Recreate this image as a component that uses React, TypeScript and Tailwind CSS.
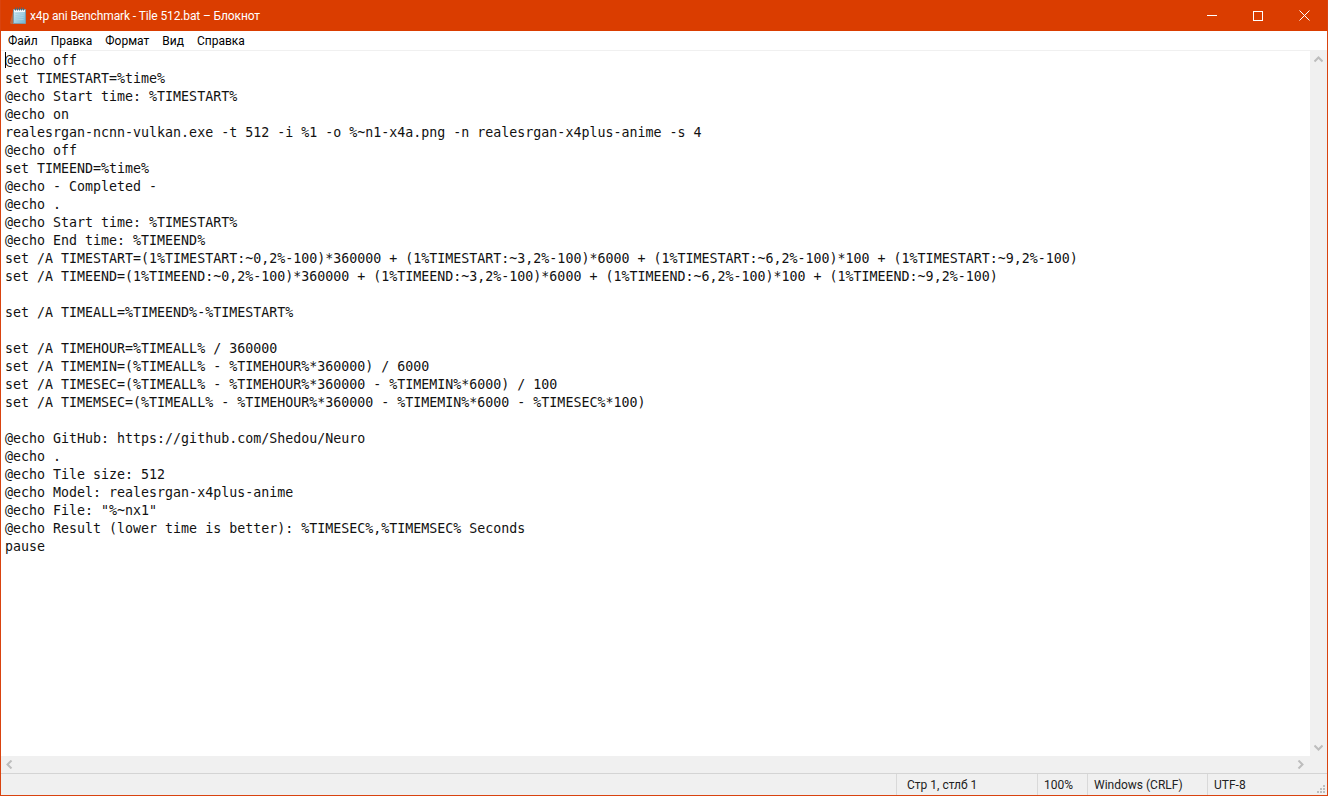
const lines = [
  "@echo off",
  "set TIMESTART=%time%",
  "@echo Start time: %TIMESTART%",
  "@echo on",
  "realesrgan-ncnn-vulkan.exe -t 512 -i %1 -o %~n1-x4a.png -n realesrgan-x4plus-anime -s 4",
  "@echo off",
  "set TIMEEND=%time%",
  "@echo - Completed -",
  "@echo .",
  "@echo Start time: %TIMESTART%",
  "@echo End time: %TIMEEND%",
  "set /A TIMESTART=(1%TIMESTART:~0,2%-100)*360000 + (1%TIMESTART:~3,2%-100)*6000 + (1%TIMESTART:~6,2%-100)*100 + (1%TIMESTART:~9,2%-100)",
  "set /A TIMEEND=(1%TIMEEND:~0,2%-100)*360000 + (1%TIMEEND:~3,2%-100)*6000 + (1%TIMEEND:~6,2%-100)*100 + (1%TIMEEND:~9,2%-100)",
  "",
  "set /A TIMEALL=%TIMEEND%-%TIMESTART%",
  "",
  "set /A TIMEHOUR=%TIMEALL% / 360000",
  "set /A TIMEMIN=(%TIMEALL% - %TIMEHOUR%*360000) / 6000",
  "set /A TIMESEC=(%TIMEALL% - %TIMEHOUR%*360000 - %TIMEMIN%*6000) / 100",
  "set /A TIMEMSEC=(%TIMEALL% - %TIMEHOUR%*360000 - %TIMEMIN%*6000 - %TIMESEC%*100)",
  "",
  "@echo GitHub: https://github.com/Shedou/Neuro",
  "@echo .",
  "@echo Tile size: 512",
  "@echo Model: realesrgan-x4plus-anime",
  '@echo File: "%~nx1"',
  "@echo Result (lower time is better): %TIMESEC%,%TIMEMSEC% Seconds",
  "pause",
];

const menu = ["Файл", "Правка", "Формат", "Вид", "Справка"];

function Arrow({ d }: { d: string }) {
  return (
    <svg width="9" height="9" viewBox="0 0 9 9" fill="none" stroke="#bdbdbd" strokeWidth="2">
      <path d={d} />
    </svg>
  );
}

function NotepadIcon() {
  return (
    <svg width="17" height="18" viewBox="0 0 17 18">
      <defs>
        <linearGradient id="page" x1="0" y1="0" x2="1" y2="1">
          <stop offset="0" stopColor="#d8edf5" />
          <stop offset="1" stopColor="#6fb3cf" />
        </linearGradient>
      </defs>
      <path d="M0 16l3-12h1v13H1z" fill="#b9764f" opacity="0.8" />
      <path d="M3.5 2.5h12v14h-12z" fill="url(#page)" stroke="#7f9aa8" />
      <path d="M4 3h11v2H4z" fill="#f4f8fa" />
      <path d="M5.5 6.5h8M5.5 8.5h8M5.5 10.5h8M5.5 12.5h8" stroke="#a9d2e2" />
      <path d="M5.5 0.5v3M7.5 0.5v3M9.5 0.5v3M11.5 0.5v3M13.5 0.5v3" stroke="#4f6472" />
    </svg>
  );
}

export default function App() {
  return (
    <div className="flex h-[796px] w-[1328px] flex-col overflow-hidden border border-t-0 border-[#d9430f] bg-white font-['Roboto','Open_Sans',sans-serif] text-black">
      <header className="flex h-[31px] shrink-0 items-center bg-[#da3d00] text-white">
        <div className="ml-[9px] flex w-[20px] shrink-0">
          <NotepadIcon />
        </div>
        <div className="flex-1 pt-px text-[12px] leading-none tracking-[-0.12px]">
          x4p ani Benchmark - Tile 512.bat – Блокнот
        </div>
        <div className="flex h-full items-center">
          <div className="flex h-full w-[46px] items-center justify-center">
            <div className="h-px w-[10px] bg-white" />
          </div>
          <div className="flex h-full w-[46px] items-center justify-center">
            <div className="h-[10px] w-[10px] border border-white" />
          </div>
          <div className="flex h-full w-[46px] items-center justify-center">
            <svg width="11" height="11" viewBox="0 0 11 11" stroke="white" strokeWidth="1">
              <path d="M.5.5l10 10M10.5.5l-10 10" />
            </svg>
          </div>
        </div>
      </header>

      <nav className="flex h-[19px] shrink-0 items-center gap-[13px] pl-[7px] text-[12px] leading-none">
        {menu.map((item) => (
          <span key={item}>{item}</span>
        ))}
      </nav>

      <div className="h-px shrink-0 bg-[#f0f0f0]" />

      <div className="flex min-h-0 flex-1">
        <main className="relative min-w-0 flex-1 overflow-hidden pt-px pl-1 font-['DejaVu_Sans_Mono','Liberation_Mono',monospace] text-[13.31px] leading-[18px] whitespace-pre text-[#111]">
          <div className="absolute top-px left-1 h-[16px] w-px bg-black" />
          {lines.map((line, i) => (
            <div key={i} className="h-[18px]">
              {line}
            </div>
          ))}
        </main>
        <div className="flex w-[17px] shrink-0 flex-col items-center justify-between bg-[#f0f0f0] py-1">
          <Arrow d="M.5 6.5l4-4 4 4" />
          <Arrow d="M.5 2.5l4 4 4-4" />
        </div>
      </div>

      <div className="flex h-[17px] shrink-0 items-center justify-between bg-[#f0f0f0] pr-[22px] pl-1">
        <Arrow d="M6.5.5l-4 4 4 4" />
        <Arrow d="M2.5.5l4 4-4 4" />
      </div>

      <footer className="relative flex h-[22px] shrink-0 border-t border-[#d4d4d4] bg-[#f0f0f0] text-[12px] leading-none text-[#222]">
        <div className="w-[895px] shrink-0" />
        <div className="flex w-[141px] shrink-0 items-center border-l border-[#d9d9d9] pl-[10px]">Стр 1, стлб 1</div>
        <div className="flex w-[50px] shrink-0 items-center border-l border-[#d9d9d9] pl-[6px]">100%</div>
        <div className="flex w-[120px] shrink-0 items-center border-l border-[#d9d9d9] pl-[6px]">Windows (CRLF)</div>
        <div className="flex flex-1 items-center border-l border-[#d9d9d9] pl-[6px]">UTF-8</div>
        <svg className="absolute right-px bottom-px" width="10" height="10" viewBox="0 0 10 10" fill="#bdbdbd">
          <path d="M7 1h2v2H7zM4 4h2v2H4zM7 4h2v2H7zM1 7h2v2H1zM4 7h2v2H4zM7 7h2v2H7z" />
        </svg>
      </footer>
    </div>
  );
}
